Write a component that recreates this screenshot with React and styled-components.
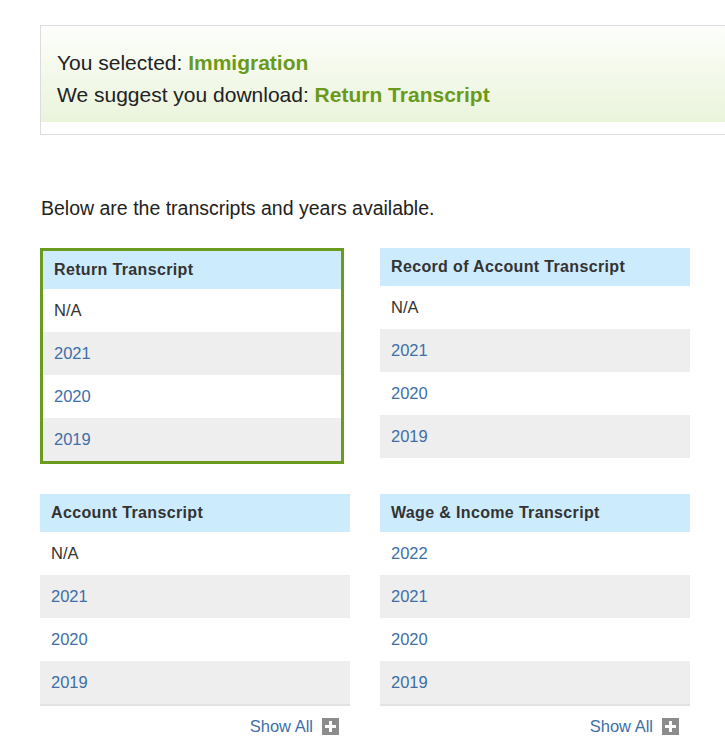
import styled, { createGlobalStyle } from "styled-components"

const GlobalStyle = createGlobalStyle`
    html, body {
        margin: 0;
        padding: 0;
        background: #FFFFFF;
        overflow: hidden;
    }
    body {
        font-family: "Liberation Sans", Arial, sans-serif;
    }
`

const StyledPage = styled.main`
    width: 725px;
    padding: 25px 0 0 40px;
    box-sizing: border-box;
`
const StyledBanner = styled.section`
    width: 720px;
    border: 1px solid #DCDCDC;
    background: #FFFFFF;
    padding-bottom: 12px;
`
const StyledBannerInner = styled.div`
    background: linear-gradient(to bottom, #FDFEFB 0%, #EAF4DB 100%);
    padding: 21px 16px 11px;
`
const StyledBannerLine = styled.p`
    margin: 0;
    font-size: 21px;
    line-height: 32px;
    color: #222222;
`
const StyledHighlight = styled.strong`
    color: #6A9A1B;
    font-weight: 700;
`
const StyledIntro = styled.p`
    margin: 62px 0 0 1px;
    font-size: 19.5px;
    line-height: 22px;
    color: #222222;
`
const StyledGrid = styled.div`
    margin-top: 29px;
    display: grid;
    grid-template-columns: 310px 310px;
    column-gap: 30px;
    row-gap: 30px;
    align-items: start;
`
const StyledCard = styled.div`
    width: ${({ $selected }) => ($selected ? "304px" : "310px")};
    box-sizing: border-box;
    border: ${({ $selected }) => ($selected ? "3px solid #6A9B1E" : "none")};
`
const StyledCardHeader = styled.h3`
    margin: 0;
    height: 38px;
    display: flex;
    align-items: center;
    padding: 0 11px;
    background: #CCEBFD;
    font-size: 16px;
    letter-spacing: 0.35px;
    font-weight: 700;
    color: #333333;
`
const StyledRow = styled.div`
    height: 43px;
    display: flex;
    align-items: center;
    padding: 0 11px;
    font-size: 16.5px;
    background: ${({ $shaded }) => ($shaded ? "#EEEEEE" : "#FFFFFF")};
    color: ${({ $link }) => ($link ? "#3E6FA7" : "#333333")};
`
const StyledCardFooter = styled.div`
    border-top: 2px solid #E2E2E2;
    display: flex;
    justify-content: flex-end;
    align-items: center;
    gap: 9px;
    padding: 11px 11px 0;
    font-size: 16.5px;
    color: #3E6FA7;
`
const StyledPlus = styled.span`
    width: 17px;
    height: 17px;
    background: #8C8C8C;
    display: inline-flex;
    align-items: center;
    justify-content: center;
`

const PlusIcon = () => (
    <StyledPlus>
        <svg width="11" height="11" viewBox="0 0 11 11">
            <rect x="4" y="0" width="3" height="11" fill="#FFFFFF" />
            <rect x="0" y="4" width="11" height="3" fill="#FFFFFF" />
        </svg>
    </StyledPlus>
)

const cards = [
    { title: "Return Transcript", years: ["N/A", "2021", "2020", "2019"], selected: true },
    { title: "Record of Account Transcript", years: ["N/A", "2021", "2020", "2019"] },
    { title: "Account Transcript", years: ["N/A", "2021", "2020", "2019"], showAll: true },
    { title: "Wage & Income Transcript", years: ["2022", "2021", "2020", "2019"], showAll: true },
]

const TranscriptCard = ({ title, years, selected, showAll }) => (
    <StyledCard $selected={selected}>
        <StyledCardHeader>{title}</StyledCardHeader>
        {years.map((year, i) => (
            <StyledRow key={year} $shaded={i % 2 === 1} $link={year !== "N/A"}>
                {year}
            </StyledRow>
        ))}
        {showAll && (
            <StyledCardFooter>
                Show All
                <PlusIcon />
            </StyledCardFooter>
        )}
    </StyledCard>
)

const App = () => {
    return (
        <>
            <GlobalStyle />
            <StyledPage>
                <StyledBanner>
                    <StyledBannerInner>
                        <StyledBannerLine>
                            You selected: <StyledHighlight>Immigration</StyledHighlight>
                        </StyledBannerLine>
                        <StyledBannerLine>
                            We suggest you download: <StyledHighlight>Return Transcript</StyledHighlight>
                        </StyledBannerLine>
                    </StyledBannerInner>
                </StyledBanner>
                <StyledIntro>Below are the transcripts and years available.</StyledIntro>
                <StyledGrid>
                    {cards.map((card) => (
                        <TranscriptCard key={card.title} {...card} />
                    ))}
                </StyledGrid>
            </StyledPage>
        </>
    )
}

export default App
